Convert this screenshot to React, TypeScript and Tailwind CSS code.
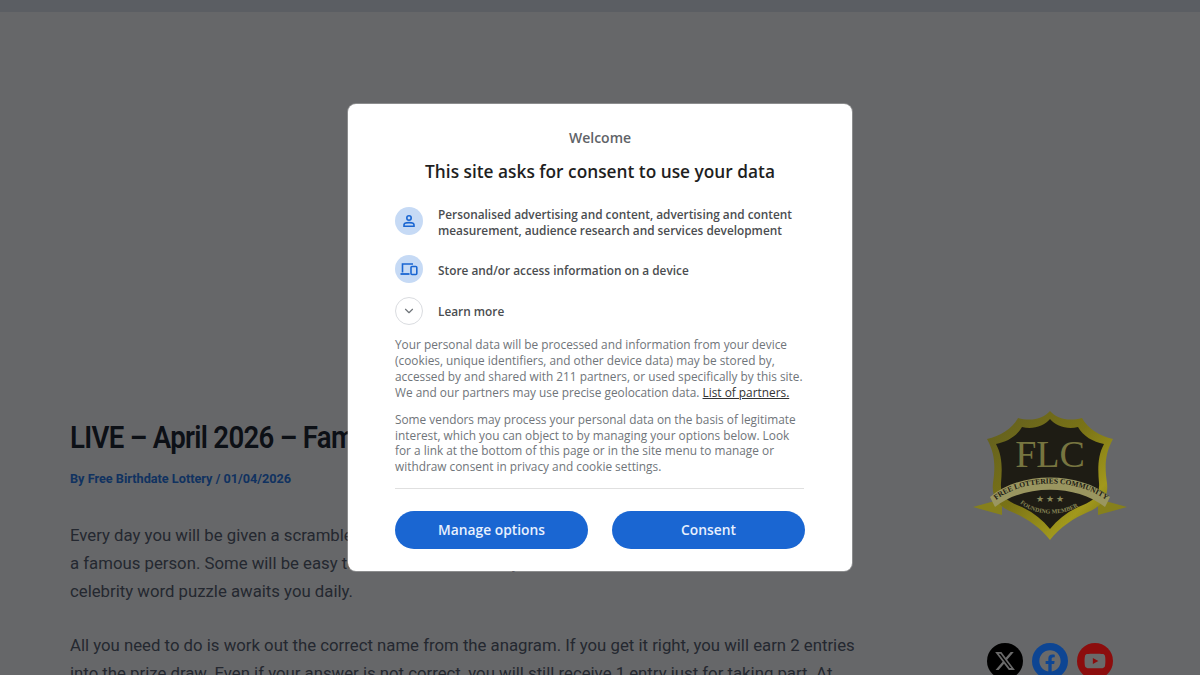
import { ChevronDown } from "lucide-react";
import { FaFacebook, FaYoutube } from "react-icons/fa";
import { FaXTwitter } from "react-icons/fa6";

function Logo() {
  return (
    <svg width="156" height="134" viewBox="0 0 156 134" className="block">
      <defs>
        <linearGradient id="rim" x1="0" y1="0" x2="1" y2="1">
          <stop offset="0" stopColor="#5f5c20" />
          <stop offset="0.45" stopColor="#7a7316" />
          <stop offset="0.75" stopColor="#a1981c" />
          <stop offset="1" stopColor="#6c6614" />
        </linearGradient>
      </defs>
      <path d="M1 98 L30 90 L30 106 Z M155 98 L126 90 L126 106 Z" fill="#86801c" />
      <path
        d="M78 2 C84 9 96 13 110 9 C116 20 128 27 141 30 C132 46 133 60 135 74 C137 90 128 98 116 103 C102 109 88 118 78 131 C68 118 54 109 40 103 C28 98 19 90 21 74 C23 60 24 46 15 30 C28 27 40 20 46 9 C60 13 72 9 78 2 Z"
        fill="url(#rim)"
      />
      <path
        d="M78 10 C84 17 95 21 106 18 C111 27 121 33 132 35 C125 48 126 62 127 74 C128 86 121 92 111 96 C98 101 87 109 78 120 C69 109 58 101 45 96 C35 92 28 86 29 74 C30 62 31 48 24 35 C35 33 45 27 50 18 C61 21 72 17 78 10 Z"
        fill="#1e1c14"
      />
      <text x="78" y="58" textAnchor="middle" fontFamily="'Liberation Serif', serif" fontSize="38" fill="#777540">
        FLC
      </text>
      <path d="M18 88 C48 62 108 62 138 88 L133 98 C104 75 52 75 23 98 Z" fill="#9a9660" />
      <path id="band" d="M24 91 C52 69 104 69 134 91" fill="none" />
      <text fontFamily="'Liberation Serif', serif" fontSize="7.5" fontWeight="700" fill="#1e1c14">
        <textPath href="#band">FREE LOTTERIES COMMUNITY</textPath>
      </text>
      <text x="78" y="93" textAnchor="middle" fontSize="9" fill="#8a8858">
        ★ ★ ★
      </text>
      <path id="band2" d="M48 94 C62 108 96 108 110 94" fill="none" />
      <text fontFamily="'Liberation Serif', serif" fontSize="6" fontWeight="700" fill="#8a8858">
        <textPath href="#band2">FOUNDING MEMBER</textPath>
      </text>
    </svg>
  );
}

function PersonIcon() {
  return (
    <svg width="14" height="14" viewBox="0 0 14 14" fill="none" stroke="#1a66d2" strokeWidth="1.6">
      <circle cx="7" cy="4" r="2.2" />
      <path d="M2 12.2 V10.8 C2 9.4 4.5 8.6 7 8.6 C9.5 8.6 12 9.4 12 10.8 V12.2 Z" />
    </svg>
  );
}

function DevicesIcon() {
  return (
    <svg width="18" height="14" viewBox="0 0 18 14" fill="none" stroke="#1a66d2" strokeWidth="1.6">
      <path d="M2.5 10.5 V2 H13" />
      <path d="M0.5 12 H9.5" strokeWidth="1.8" />
      <rect x="11" y="4.5" width="5.8" height="8" rx="1" />
    </svg>
  );
}

export default function App() {
  return (
    <div className="relative h-[675px] w-[1200px] overflow-hidden bg-white font-['Roboto',sans-serif]">
      <div className="h-3 bg-[#e4e9f0]" />
      <div className="flex pl-[70px] pt-[406px]">
        <main className="w-[790px] shrink-0">
          <h1 className="h-10 origin-left whitespace-nowrap text-[31px] leading-10 font-semibold tracking-tight text-[#1e2530] [transform:scaleX(0.89)]">
            LIVE – April 2026 – Famous Anagrams
          </h1>
          <p className="mt-[11px] text-[12.7px] leading-5 font-bold text-[#2a7ae8]">
            By Free Birthdate Lottery / 01/04/2026
          </p>
          <p className="mt-[32px] text-[16.75px] leading-7 text-[#5a6270]">
            Every day you will be given a scrambled name, and you must rearrange the letters to spell
            <br />
            a famous person. Some will be easy to solve and others may be harder, but a new
            <br />
            celebrity word puzzle awaits you daily.
          </p>
          <p className="mt-[26px] whitespace-nowrap text-[16.75px] leading-7 text-[#5a6270]">
            All you need to do is work out the correct name from the anagram. If you get it right, you will earn 2 entries
            <br />
            into the prize draw. Even if your answer is not correct, you will still receive 1 entry just for taking part. At
          </p>
        </main>
        <aside className="flex flex-1 flex-col items-center pl-10">
          <div className="relative z-10 mt-[-9px]">
            <Logo />
          </div>
          <div className="relative z-10 mt-[100px] flex gap-[9px]">
            <span className="flex h-9 w-9 items-center justify-center rounded-full bg-black text-[22px] text-[#6a6a6a]">
              <FaXTwitter />
            </span>
            <span className="flex h-9 w-9 items-center justify-center rounded-full bg-[#0d4593] text-[22px] text-[#6a6a6a]">
              <FaFacebook />
            </span>
            <span className="flex h-9 w-9 items-center justify-center rounded-full bg-[#8c0d0d] text-[22px] text-[#6a6a6a]">
              <FaYoutube />
            </span>
          </div>
        </aside>
      </div>

      {/* consent overlay */}
      <div className="absolute inset-0 bg-[#000205]/60" />
      <div className="absolute left-[348px] top-[104px] h-[467px] w-[504px] rounded-lg bg-white pl-[47px] pt-6 font-['Open_Sans',sans-serif] shadow-[0_0_0_1px_rgba(255,255,255,0.25)]">
        <p className="pr-[47px] text-center text-sm leading-5 font-semibold text-[#5f6368]">Welcome</p>
        <h2 className="mt-[11px] pr-[47px] text-center text-[17.3px] leading-[25px] font-semibold text-[#1f1f1f]">
          This site asks for consent to use your data
        </h2>
        <div className="mt-[22px] flex h-8 items-center gap-[15px]">
          <span className="mt-[-2px] flex h-7 w-7 shrink-0 items-center justify-center rounded-full bg-[#c6daf5]">
            <PersonIcon />
          </span>
          <p className="whitespace-nowrap text-[11.83px] leading-4 font-semibold text-[#4a4d50]">
            Personalised advertising and content, advertising and content
            <br />
            measurement, audience research and services development
          </p>
        </div>
        <div className="mt-[16px] flex h-8 items-center gap-[15px]">
          <span className="mt-[-2px] flex h-7 w-7 shrink-0 items-center justify-center rounded-full bg-[#c6daf5]">
            <DevicesIcon />
          </span>
          <p className="text-[11.83px] leading-4 font-semibold text-[#4a4d50]">Store and/or access information on a device</p>
        </div>
        <div className="mt-[9px] flex h-8 items-center gap-[15px]">
          <span className="flex h-7 w-7 shrink-0 items-center justify-center rounded-full border border-[#dadce0] text-[#70757a]">
            <ChevronDown size={14} />
          </span>
          <p className="text-[11.83px] leading-4 font-semibold text-[#4a4d50]">Learn more</p>
        </div>
        <p className="mt-[9px] whitespace-nowrap text-[11.85px] leading-4 text-[#70757a]">
          Your personal data will be processed and information from your device
          <br />
          (cookies, unique identifiers, and other device data) may be stored by,
          <br />
          accessed by and shared with 211 partners, or used specifically by this site.
          <br />
          We and our partners may use precise geolocation data.{" "}
          <span className="text-[#333] underline">List of partners.</span>
        </p>
        <p className="mt-3 whitespace-nowrap text-[11.85px] leading-[15.67px] text-[#70757a]">
          Some vendors may process your personal data on the basis of legitimate
          <br />
          interest, which you can object to by managing your options below. Look
          <br />
          for a link at the bottom of this page or in the site menu to manage or
          <br />
          withdraw consent in privacy and cookie settings.
        </p>
        <div className="mt-[13px] h-px w-[409px] bg-[#e0e0e0]" />
        <div className="mt-[22px] flex w-[410px] justify-between">
          <button className="h-[38px] w-[193px] rounded-full bg-[#1a66d2] pt-px text-[13.8px] font-semibold text-[#e8f0fe]">
            Manage options
          </button>
          <button className="h-[38px] w-[193px] rounded-full bg-[#1a66d2] pt-px text-[13.8px] font-semibold text-[#e8f0fe]">
            Consent
          </button>
        </div>
      </div>
    </div>
  );
}
